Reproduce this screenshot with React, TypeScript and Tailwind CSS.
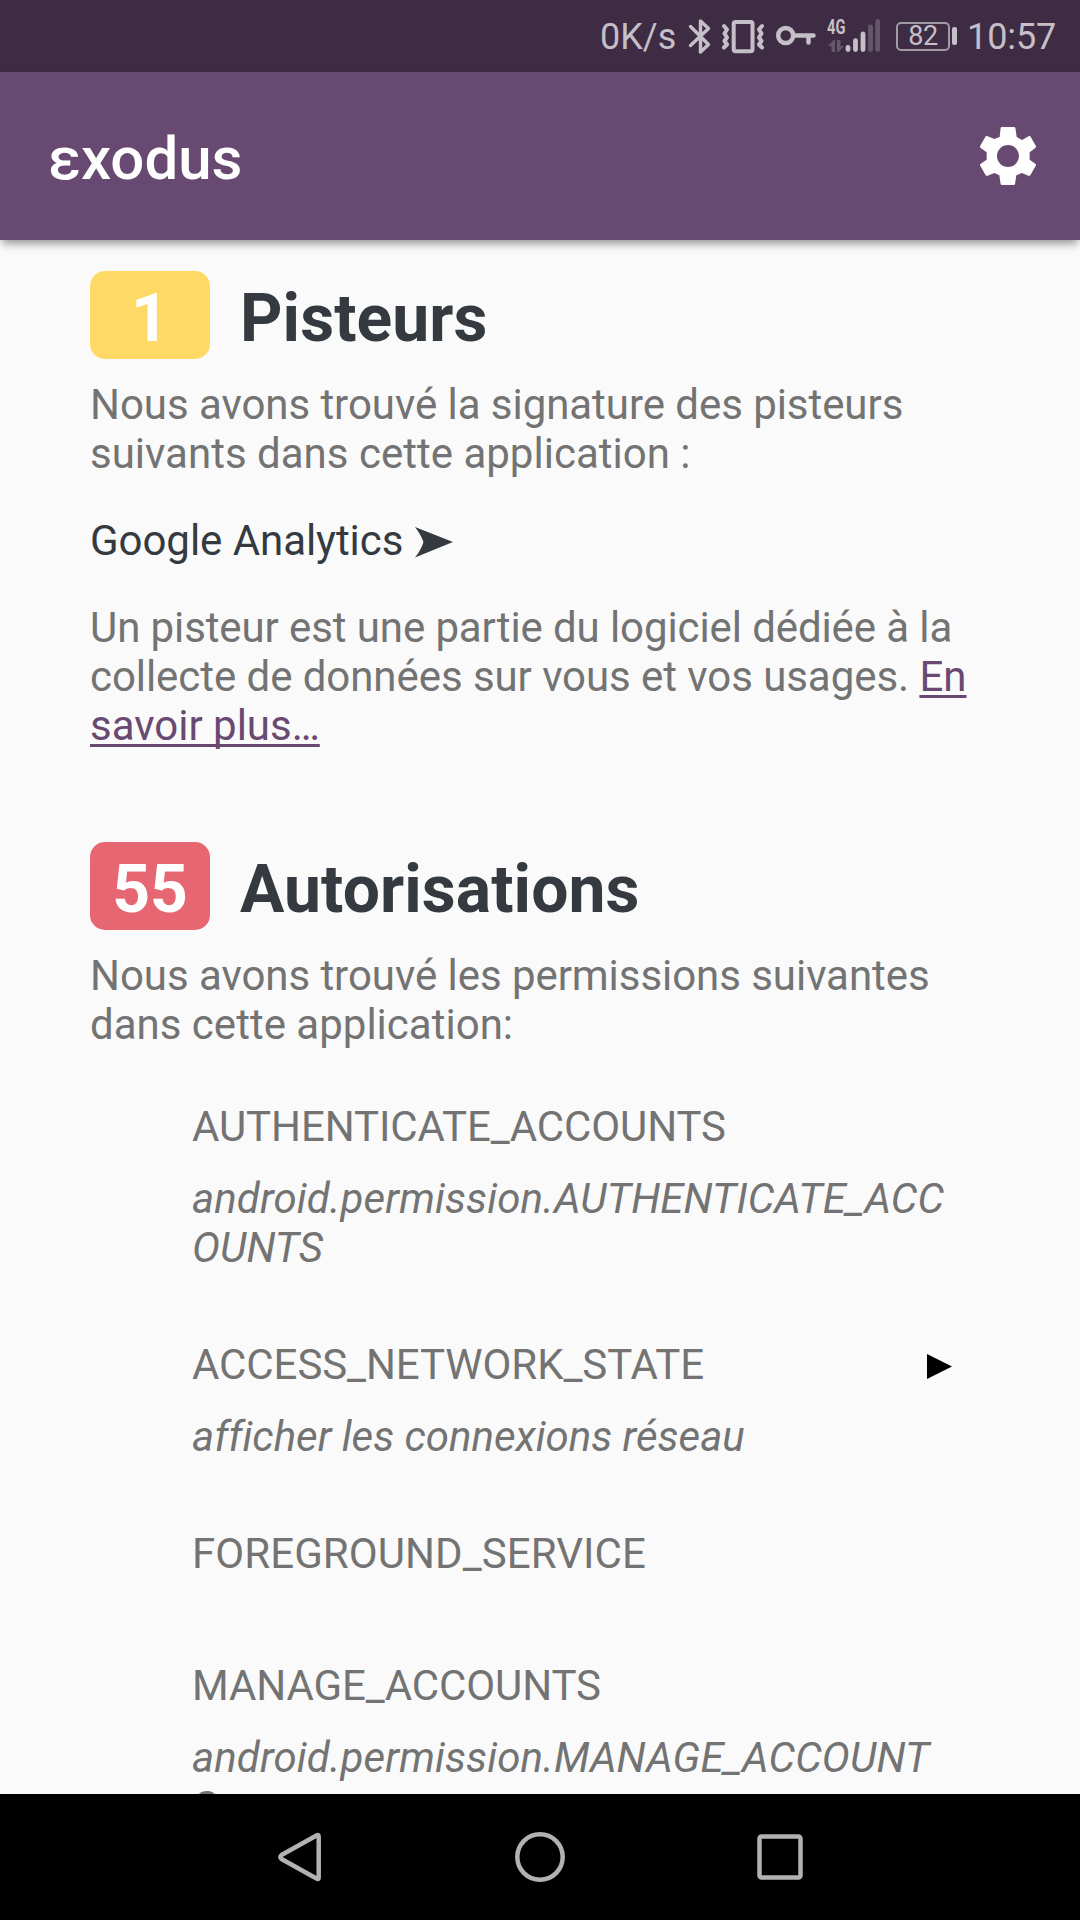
import React from "react";

function StatusIcons() {
  return (
    <svg className="h-[72px] w-[208px] shrink-0" viewBox="688 0 208 72" fill="none" stroke="#c5bfc7" strokeLinecap="round" strokeLinejoin="round">
      <path strokeWidth="3.400" d="M690.500 26.500L708.500 44.500 700.500 52V21L708.500 28.500 690.500 45.500" />
      <rect strokeWidth="4" x="733.7" y="22" width="18.800" height="29.200" rx="2" />
      <path strokeWidth="4" d="M724 26l3 3.500-2.500 4 2.500 4-2.500 3.500 2.500 3.500-3 3M762 26l-3 3.500 2.500 4-2.500 4 2.500 3.500-2.500 3.500 3 3" />
      <circle strokeWidth="4.500" cx="785.7" cy="35.500" r="7.500" />
      <path strokeWidth="4.500" d="M795 35.500h18.500M808.500 36v6.500" />
      <g strokeWidth="4.800">
        <path d="M848 47.500v2M855.500 40.700v8.800M863 34v15.500" />
        <path stroke="#65566a" d="M870.500 27v22.500M877.700 21.500v28" />
      </g>
      <path fill="#65566a" stroke="none" d="M828 46l5.500-6h1.500v12h-3.500v-6zM837 40h3.500v6h3.500l-5.500 6H837z" />
    </svg>
  );
}

function StatusBar() {
  return (
    <div className="relative flex h-[72px] shrink-0 items-center bg-[#3e2c44] pl-[600px] text-[36px] text-[#c5bfc7]">
      <span className="w-[88px] whitespace-nowrap pt-[3px]">0K/s</span>
      <StatusIcons />
      <span className="absolute left-[827px] top-[15px] origin-left scale-x-[0.7] text-[21px] font-bold leading-[24px]">4G</span>
      <div className="flex h-[29px] w-[54px] items-center justify-center rounded-[5px] border-2 border-[#a199a4] text-[27px] leading-[29px] tracking-[-0.3px]">82</div>
      <div className="ml-[2px] h-[18px] w-[5px] rounded-[2px] bg-[#c5bfc7]" />
      <span className="ml-[10px] pt-[3px] tracking-[-0.1px]">10:57</span>
    </div>
  );
}

function Header() {
  return (
    <header className="z-10 flex h-[168px] shrink-0 items-center justify-between bg-[#684971] pl-12 pr-10 text-white shadow-[0_6px_8px_-2px_rgba(0,0,0,0.38)]">
      <h1 className="pt-[5px] text-[60px] font-medium">εxodus</h1>
      <svg className="size-16" viewBox="108 72 192 192" fill="currentColor">
        <path fillRule="evenodd" d="M184 81H223L226 83 230 111 246 120 267 108 271 109 288 139 287 143 269 157V179L287 192 288 196 271 226 267 228 246 219 229 226 225 253 222 255H185L182 253 178 226 163 219 141 228 137 226 120 196 121 192 140 179V157L121 143 120 139 137 109 141 108 163 117 179 111 182 83ZM204 135a33 33 0 1 0 0 66a33 33 0 1 0 0-66Z" />
      </svg>
    </header>
  );
}

function SectionTitle({ count, title, color }: { count: number; title: string; color: string }) {
  return (
    <div className="flex h-[88px] gap-[30px] text-[66px] font-bold leading-[88px]">
      <span className={`h-[88px] w-[120px] rounded-[15px] pt-[4px] text-center text-white ${color}`}>{count}</span>
      <h2 className="pt-[4px] tracking-[0.08px] text-[#343a40]">{title}</h2>
    </div>
  );
}

type Permission = { name: string; lines?: string[]; expandable?: boolean; tracking?: string };

const permissions: Permission[] = [
  { name: "AUTHENTICATE_ACCOUNTS", lines: ["android.permission.AUTHENTICATE_ACC", "OUNTS"], tracking: "tracking-[-0.1px]" },
  { name: "ACCESS_NETWORK_STATE", lines: ["afficher les connexions réseau"], expandable: true, tracking: "tracking-[-0.08px]" },
  { name: "FOREGROUND_SERVICE", tracking: "tracking-[0.07px]" },
  { name: "MANAGE_ACCOUNTS", lines: ["android.permission.MANAGE_ACCOUNT", "S"], tracking: "tracking-[-0.1px]" },
];

function PermissionItem({ name, lines, expandable, tracking }: Permission) {
  return (
    <li className="pb-[68px]">
      <div className="flex items-center justify-between pr-[38px]">
        <span className={tracking}>{name}</span>
        {expandable && (
          <svg className="mt-[4px] h-[25px] w-[25px]" viewBox="0 0 25 25">
            <path d="M0 0L25 12.500 0 25Z" />
          </svg>
        )}
      </div>
      {lines ? (
        <p className="mt-[23px] whitespace-nowrap italic">
          {lines.map((line) => (
            <span key={line} className={line.startsWith("android") ? "block tracking-[0.09px]" : "block tracking-[-0.02px]"}>{line}</span>
          ))}
        </p>
      ) : (
        <div className="h-[15px]" />
      )}
    </li>
  );
}

function NavigationBar() {
  return (
    <nav className="flex h-[126px] shrink-0 items-center justify-center gap-[180px] bg-black">
      {[
        <path key="back" d="M46.500 8.500Q48.700 7 48.700 9.500V50.500Q48.700 53 46.500 51.500L11.500 32Q9.500 30 11.500 28Z" />,
        <circle key="home" cx="30" cy="30" r="22.700" />,
        <rect key="recent" x="9.500" y="9.500" width="41" height="41" rx="2" />,
      ].map((shape) => (
        <svg key={shape.key} className="size-[60px]" viewBox="0 0 60 60" fill="none" stroke="#b2b2b2" strokeWidth="4.500" strokeLinejoin="round">
          {shape}
        </svg>
      ))}
    </nav>
  );
}

export default function App() {
  return (
    <div className="flex h-[1920px] w-[1080px] flex-col overflow-hidden bg-[#fafafa] font-['Roboto',sans-serif] text-[42px] leading-[49px] text-[#737373]">
      <StatusBar />
      <Header />
      <main className="min-h-0 flex-1 overflow-hidden px-[90px] pt-[31px] tracking-[-0.05px]">
        <section>
          <SectionTitle count={1} title="Pisteurs" color="bg-[#ffd966]" />
          <p className="mt-[21px]">Nous avons trouvé la signature des pisteurs<br /><span className="tracking-[0.01px]">suivants dans cette application :</span></p>
          <p className="mt-[38px] flex text-[#343a40]">
            Google Analytics
            <svg className="ml-[12px] mt-[11px] h-[31px] w-[38px]" viewBox="0 0 38 31" fill="currentColor">
              <path d="M0 0L38 15 0 30.500Q6 23 8.500 15Q6 8 0 0Z" />
            </svg>
          </p>
          <p className="mt-[38px] whitespace-nowrap">
            <span className="tracking-[-0.1px]">Un pisteur est une partie du logiciel dédiée à la</span><br />
            <span className="tracking-[-0.06px]">collecte de données sur vous et vos usages. </span>
            <a className="tracking-[0px] text-[#684971] underline decoration-[3px] underline-offset-[4px] [text-decoration-skip-ink:none]">En<br />savoir plus…</a>
          </p>
        </section>
        <section className="mt-[92px]">
          <SectionTitle count={55} title="Autorisations" color="bg-[#e66771]" />
          <p className="mt-[21px]">Nous avons trouvé les permissions suivantes<br /><span className="tracking-[0.01px]">dans cette application:</span></p>
          <ul className="mt-[53px] pl-[102px]">
            {permissions.map((permission) => (
              <PermissionItem key={permission.name} {...permission} />
            ))}
          </ul>
        </section>
      </main>
      <NavigationBar />
    </div>
  );
}
